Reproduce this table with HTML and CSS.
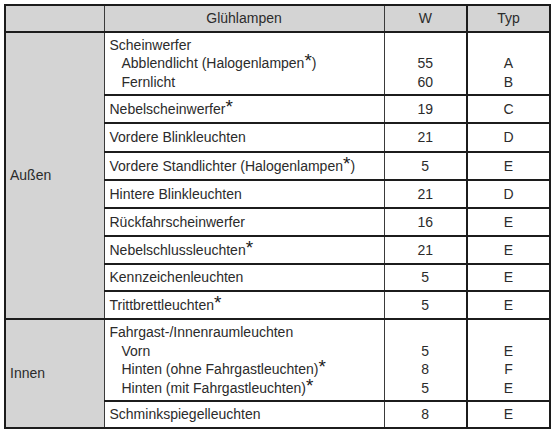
FILE: index.html
```html
<!DOCTYPE html>
<html lang="de">
<head>
<meta charset="utf-8">
<title>Glühlampen</title>
<link rel="stylesheet" href="styles.css">
</head>
<body>
<table class="lamps">
  <colgroup>
    <col class="c-area"><col class="c-name"><col class="c-w"><col class="c-typ">
  </colgroup>
  <thead>
    <tr class="head">
      <th class="area"></th>
      <th>Glühlampen</th>
      <th class="w">W</th>
      <th class="typ">Typ</th>
    </tr>
  </thead>
  <tbody class="group">
    <tr class="r63">
      <td class="area" rowspan="9">Außen</td>
      <td class="name">Scheinwerfer<br><span class="ind">Abblendlicht (Halogenlampen<span class="ast">*</span>)</span><br><span class="ind">Fernlicht</span></td>
      <td class="w"><br>55<br>60</td>
      <td class="typ"><br>A<br>B</td>
    </tr>
    <tr class="r28"><td class="name">Nebelscheinwerfer<span class="ast">*</span></td><td class="w">19</td><td class="typ">C</td></tr>
    <tr class="r29"><td class="name">Vordere Blinkleuchten</td><td class="w">21</td><td class="typ">D</td></tr>
    <tr class="r28"><td class="name">Vordere Standlichter (Halogenlampen<span class="ast">*</span>)</td><td class="w">5</td><td class="typ">E</td></tr>
    <tr class="r28"><td class="name">Hintere Blinkleuchten</td><td class="w">21</td><td class="typ">D</td></tr>
    <tr class="r28"><td class="name">Rückfahrscheinwerfer</td><td class="w">16</td><td class="typ">E</td></tr>
    <tr class="r28"><td class="name">Nebelschlussleuchten<span class="ast">*</span></td><td class="w">21</td><td class="typ">E</td></tr>
    <tr class="r27"><td class="name">Kennzeichenleuchten</td><td class="w">5</td><td class="typ">E</td></tr>
    <tr class="r28"><td class="name">Trittbrettleuchten<span class="ast">*</span></td><td class="w">5</td><td class="typ">E</td></tr>
  </tbody>
  <tbody class="group">
    <tr class="r83">
      <td class="area" rowspan="2">Innen</td>
      <td class="name">Fahrgast-/Innenraumleuchten<br><span class="ind">Vorn</span><br><span class="ind">Hinten (ohne Fahrgastleuchten)<span class="ast">*</span></span><br><span class="ind">Hinten (mit Fahrgastleuchten)<span class="ast">*</span></span></td>
      <td class="w"><br>5<br>8<br>5</td>
      <td class="typ"><br>E<br>F<br>E</td>
    </tr>
    <tr class="r27"><td class="name">Schminkspiegelleuchten</td><td class="w">8</td><td class="typ">E</td></tr>
  </tbody>
</table>
</body>
</html>
```

FILE: styles.css
```css
html, body {
  margin: 0;
  padding: 0;
  background: #ffffff;
}

body {
  padding: 4px 0 0 4px;
  font-family: "Liberation Sans", Arial, sans-serif;
  font-size: 14px;
  color: #2b2b2b;
}

.lamps {
  border-collapse: collapse;
  table-layout: fixed;
  width: 545px;
  border: 2px solid #1c1c1c;
}

.c-area { width: 99px; }
.c-name { width: 280px; }
.c-w { width: 83px; }
.c-typ { width: 83px; }

.lamps th,
.lamps td {
  padding: 0 6px;
  line-height: 18.5px;
  vertical-align: middle;
  border: 1px solid #3a3a3a;
}

.lamps th {
  font-weight: normal;
  background: #d4d4d4;
  text-align: center;
  height: 25px;
}

.lamps td.name {
  padding-left: 5px;
  border-top: 2px solid #1c1c1c;
  border-bottom: 2px solid #1c1c1c;
}

.lamps td.w,
.lamps td.typ {
  text-align: center;
  border-top: 2px solid #1c1c1c;
  border-bottom: 2px solid #1c1c1c;
}

.lamps .typ {
  border-left: 2px solid #1c1c1c;
}

.lamps td.area {
  padding-left: 4px;
  background: #d4d4d4;
  border-top: 2px solid #1c1c1c;
  border-bottom: 2px solid #1c1c1c;
}

.r27 td { height: 25px; }
.r28 td { height: 26px; }
.r29 td { height: 27px; }
.r63 td { height: 61px; }
.r83 td { height: 80px; }

.ind {
  padding-left: 12px;
}

.ast {
  font-size: 19px;
  line-height: 0;
  vertical-align: 1px;
  color: #1a1a1a;
}
```
